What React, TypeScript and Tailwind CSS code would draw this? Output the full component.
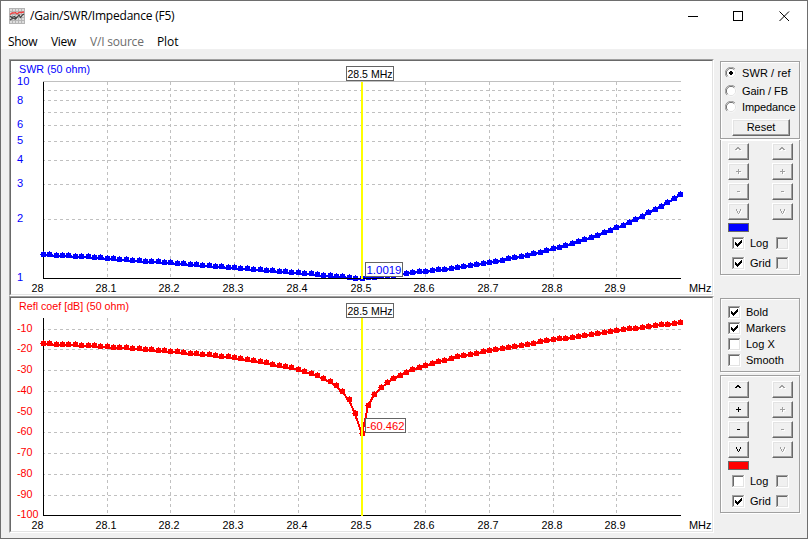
import { useState } from 'react'
import clsx from 'clsx'

// [step, return loss in dB], one step = 0.01 MHz from 28 MHz
const SWEEP = [
  [0, -17.1], [5, -17.7], [10, -18.55], [15, -19.6], [20, -20.8], [25, -22.2], [30, -23.9], [35, -26.4],
  [40, -29.5], [41, -30.5], [42, -31.4], [43, -32.4], [44, -33.9], [45, -35.3], [46, -37.2], [47, -40.1],
  [48, -44], [49, -50.8], [50, -60.462], [51, -46.9], [52, -41.6], [53, -38.1], [54, -36], [55, -33.9],
  [56, -32.4], [57, -31], [58, -29.5], [59, -28.4], [60, -27.6], [65, -23.5], [70, -20.4], [75, -17.8],
  [80, -15.3], [85, -13], [90, -10.8], [95, -8.75], [100, -6.83],
]

const STEPS = Array.from({ length: 101 }, (_, i) => i)
const TICKS = Array.from({ length: 10 }, (_, i) => i)

const SWR_GRID = [219, 184, 160, 141, 125, 112, 100, 90]
const SWR_LABELS = [['10', 85], ['8', 104], ['6', 128], ['5', 144], ['4', 163], ['3', 187], ['2', 222], ['1', 281]] as const
const REFL_GRID = [329, 349, 370, 391, 412, 432, 453, 474, 495]

function lossAt(step: number) {
  const next = Math.max(1, SWEEP.findIndex(p => p[0] >= step))
  const [x0, y0] = SWEEP[next - 1]
  const [x1, y1] = SWEEP[next]
  return y0 + ((y1 - y0) * (step - x0)) / (x1 - x0)
}

const xAt = (step: number) => Math.round(43 + step * 6.37)
const reflY = (step: number) => Math.floor(515 - (lossAt(step) + 100) * 2.067)
const swrY = (step: number) => {
  const gamma = Math.pow(10, lossAt(step) / 20)
  return Math.round(278 - 197 * Math.log10((1 + gamma) / (1 - gamma)))
}

function Txt({ x, y, w, children, fill = '#000' }: { x: number; y: number; w: number; children: string; fill?: string }) {
  return (
    <text x={x} y={y} fill={fill} textLength={w} lengthAdjust="spacingAndGlyphs">
      {children}
    </text>
  )
}

function Tag({ x, y, w, text, fill }: { x: number; y: number; w: number; text: string; fill?: string }) {
  return (
    <g>
      <rect x={x + 0.5} y={y + 0.5} width={w - 1} height={14} fill="#fff" stroke="#646464" />
      <Txt x={x + 1.5} y={y + 11.7} w={w - 3} fill={fill}>{text}</Txt>
    </g>
  )
}

interface PlotProps {
  top: number
  bottom: number
  grid: number[]
  color: string
  yAt: (step: number) => number
}

function Plot({ top, bottom, grid, color, yAt }: PlotProps) {
  return (
    <g shapeRendering="crispEdges">
      {grid.map(y => (
        <path key={y} d={`M44 ${y + 0.5}H681`} stroke="#c0c0c0" strokeDasharray="3 3" strokeDashoffset={2} />
      ))}
      {TICKS.slice(1).map(t => (
        <path key={t} d={`M${xAt(t * 10) + 0.5} ${top}V${bottom}`} stroke="#c0c0c0" strokeDasharray="3 3" />
      ))}
      <path d={`M43.5 ${top}V${bottom + 0.5}`} stroke="#000" fill="none" />
      <polyline
        points={STEPS.map(s => `${xAt(s)},${yAt(s) + 1}`).join(' ')}
        fill="none"
        stroke={color}
        strokeWidth={2}
      />
      {STEPS.map(s => (
        <path key={s} d={`M${xAt(s) - 2} ${yAt(s) - 2}h2v-1h1v1h2v5h-5v-2h-1v-1h1z`} fill={color} />
      ))}
      <path d={`M43 ${bottom + 0.5}H681`} stroke="#000" />
      <rect x={361} y={top - 1} width={2} height={bottom - top + 2} fill="#ff0" />
    </g>
  )
}

function FreqLabels({ y }: { y: number }) {
  return (
    <g>
      <Txt x={31.5} y={y} w={12}>28</Txt>
      {TICKS.slice(1).map(t => (
        <Txt key={t} x={xAt(t * 10) - 11.5} y={y} w={21}>{`28.${t}`}</Txt>
      ))}
      <Txt x={689} y={y} w={22.5}>MHz</Txt>
    </g>
  )
}

const PANEL = 'h-[237px] w-[705px] border border-t-[#a0a0a0] border-l-[#a0a0a0] border-r-white border-b-white'
const PANEL_IN = 'h-[235px] w-[703px] border border-t-[#696969] border-l-[#696969] border-r-[#e3e3e3] border-b-[#e3e3e3] bg-white'
const CHART_TEXT = "block font-['Liberation_Sans',Arial,sans-serif] text-[11.5px]"

function SwrChart() {
  return (
    <div className={PANEL}>
      <div className={PANEL_IN}>
        <svg width={701} height={233} viewBox="11 61 701 233" className={CHART_TEXT}>
          <Plot top={82} bottom={278} grid={SWR_GRID} color="#00f" yAt={swrY} />
          <path d="M43 81.5H681" stroke="#c0c0c0" />
          <Txt x={19} y={73} w={71} fill="#00f">SWR (50 ohm)</Txt>
          {SWR_LABELS.map(([label, y]) => (
            <Txt key={label} x={17} y={y} w={label.length * 6.2} fill="#00f">{label}</Txt>
          ))}
          <FreqLabels y={291.5} />
          <Tag x={346} y={66} w={48} text="28.5 MHz" />
          <Tag x={365} y={262} w={38} text="1.0019" fill="#00f" />
        </svg>
      </div>
    </div>
  )
}

function ReflChart() {
  return (
    <div className={PANEL}>
      <div className={PANEL_IN}>
        <svg width={701} height={233} viewBox="11 298 701 233" className={CHART_TEXT}>
          <Plot top={318} bottom={515} grid={REFL_GRID} color="#f00" yAt={reflY} />
          <Txt x={19} y={310} w={110} fill="#f00">Refl coef [dB] (50 ohm)</Txt>
          {[...REFL_GRID, 515].map((y, i) => (
            <Txt key={y} x={17} y={y + 3} w={i === 9 ? 21.5 : 15.5} fill="#f00">{`-${(i + 1) * 10}`}</Txt>
          ))}
          <FreqLabels y={528.7} />
          <Tag x={346} y={303} w={48} text="28.5 MHz" />
          <Tag x={365} y={418} w={41} text="-60.462" fill="#f00" />
        </svg>
      </div>
    </div>
  )
}

function Radio({ label, checked, onSelect, className }: { label: string; checked: boolean; onSelect: () => void; className: string }) {
  return (
    <button onClick={onSelect} className="flex h-3 items-center gap-[5px] whitespace-nowrap">
      <svg width={12} height={12} viewBox="0 0 12 12" className="shrink-0">
        <circle cx={6} cy={6} r={5.5} fill="#fff" />
        <path d="M1.9 10.1A5.5 5.5 0 0 1 10.1 1.9" stroke="#a0a0a0" fill="none" />
        <path d="M2.7 9.3A4.6 4.6 0 0 1 9.3 2.7" stroke="#696969" fill="none" />
        <path d="M9.3 2.7A4.6 4.6 0 0 1 2.7 9.3" stroke="#e3e3e3" fill="none" />
        {checked && <path d="M5 4h2v1h1v2h-1v1h-2v-1h-1v-2h1z" fill="#000" shapeRendering="crispEdges" />}
      </svg>
      <span className={className}>{label}</span>
    </button>
  )
}

function Check({ on = false, disabled = false }: { on?: boolean; disabled?: boolean }) {
  return (
    <svg width={13} height={13} viewBox="0 0 13 13" shapeRendering="crispEdges" className="block shrink-0">
      <rect width={13} height={13} fill="#fff" />
      <path d="M0 0h12v1h-11v11h-1z" fill="#a0a0a0" />
      <path d="M1 1h10v1h-9v9h-1z" fill="#696969" />
      <path d="M11 1h1v11h-11v-1h10z" fill="#e3e3e3" />
      {disabled && <rect x={2} y={2} width={9} height={9} fill="#f0f0f0" />}
      {on && <path d="M3 5h1v1h1v1h1v-1h1v-1h1v-1h1v-1h1v3h-1v1h-1v1h-1v1h-1v1h-1v-1h-1v-1h-1z" fill="#000" />}
    </svg>
  )
}

function Option({ label, on }: { label: string; on?: boolean }) {
  return (
    <div className="flex h-[13px] items-center gap-[5px]">
      <Check on={on} />
      <span className="pb-0.5">{label}</span>
    </div>
  )
}

const GLYPHS: Record<string, string> = {
  up: 'M9 4h2v1h1v1h1v1h-2v-1h-2v1h-2v-1h1v-1h1z',
  plus: 'M10 6h1v2h2v1h-2v2h-1v-2h-2v-1h2z',
  minus: 'M9 8h3v1h-3z',
  down: 'M8 6h1v2h1v2h1v-2h1v-2h1v2h-1v2h-1v1h-1v-1h-1v-2h-1z',
}

const RAISED = 'border border-t-white border-l-white border-r-[#696969] border-b-[#696969] shadow-[inset_-1px_-1px_0_#a0a0a0,inset_1px_1px_0_#e3e3e3]'

function SpinButton({ kind, disabled }: { kind: string; disabled?: boolean }) {
  return (
    <button disabled={disabled} className={clsx('h-[17px] w-[21px]', RAISED)}>
      <svg width={21} height={17} viewBox="0 0 21 17" shapeRendering="crispEdges" className="-mt-px -ml-px block max-w-none">
        {disabled && <path d={GLYPHS[kind]} fill="#fff" transform="translate(1 1)" />}
        <path d={GLYPHS[kind]} fill={disabled ? '#a0a0a0' : '#000'} />
      </svg>
    </button>
  )
}

function SpinColumn({ disabled }: { disabled?: boolean }) {
  return (
    <div className="flex flex-col gap-[3px]">
      {Object.keys(GLYPHS).map(k => <SpinButton key={k} kind={k} disabled={disabled} />)}
    </div>
  )
}

const GROUP = 'w-20 border border-[#a0a0a0] shadow-[1px_1px_0_#fff,inset_1px_1px_0_#fff]'

function ScaleGroup({ className, swatch, log, disabled }: { className: string; swatch: string; log: boolean; disabled?: boolean }) {
  return (
    <div className={clsx(GROUP, 'px-[7px]', className)}>
      <div className="flex w-[65px] justify-between">
        <SpinColumn disabled={disabled} />
        <SpinColumn disabled />
      </div>
      <div className={clsx('mt-[3px] h-[9px] w-[21px] border border-[#696969]', swatch)} />
      <div className="mt-[5px] ml-1 flex h-[13px] items-center">
        <Check on={log} />
        <span className="ml-[5px] w-[26px] pb-0.5">Log</span>
        <Check disabled />
      </div>
      <div className="mt-[7px] ml-1 flex h-[13px] items-center">
        <Check on />
        <span className="ml-[5px] w-[26px] pb-0.5">Grid</span>
        <Check disabled />
      </div>
    </div>
  )
}

function AppIcon() {
  return (
    <svg width={16} height={16} viewBox="0 0 16 16">
      <rect width={16} height={16} fill="#dcdcdc" />
      <path
        d="M0 .5H16M0 3.5H16M0 6.5H16M0 9.5H16M0 12.5H16M0 15.5H16M.5 0V16M3.5 0V16M6.5 0V16M9.5 0V16M12.5 0V16M15.5 0V16"
        stroke="#b4b4b4"
        shapeRendering="crispEdges"
      />
      <path d="M1 6.5L3 5H5L6.500 4.500L8 6L10 4.500H12L15 4" stroke="#f04040" strokeWidth={1.3} fill="none" />
      <path d="M1 8l2 1.500 2.500-1 1.500 2 3-3.500 1.500 2.500 2-2.500L15 6M1 12l3-2 2 1 2-2" stroke="#404040" strokeWidth={1.1} fill="none" />
    </svg>
  )
}

export default function App() {
  const [mode, setMode] = useState('SWR / ref')

  return (
    <div className="flex h-[539px] w-[808px] flex-col border border-[#6e6e6e] bg-[#f0f0f0] font-['Liberation_Sans',Arial,sans-serif] text-[11px] leading-3 text-black select-none">
      <header className="h-12 bg-white font-['Open_Sans','Noto_Sans',sans-serif] text-xs leading-4">
        <div className="flex h-[29px] items-center pl-2">
          <AppIcon />
          <h1 className="ml-[5px] tracking-[-0.22px]">/Gain/SWR/Impedance (F5)</h1>
          <svg width={102} height={12} viewBox="688 9 102 12" className="ml-auto mr-[17px]" fill="none" stroke="#000">
            <path d="M688 15.5h10M733.5 10.5h9v9h-9z" shapeRendering="crispEdges" />
            <path d="M779.5 10.5l9.5 9.5M789 10.5l-9.5 9.5" />
          </svg>
        </div>
        <nav className="flex h-[19px] items-start pt-1 pl-[7px]">
          <span className="w-[43px] tracking-[-0.3px]">Show</span>
          <span className="w-[39px] tracking-[-0.3px]">View</span>
          <span className="w-[67px] tracking-[-0.2px] text-[#6d6d6d]">V/I source</span>
          <span className="tracking-[-0.1px]">Plot</span>
        </nav>
      </header>

      <main className="flex gap-1.5 pt-2.5 pl-2">
        <div className="flex flex-col">
          <SwrChart />
          <ReflChart />
        </div>

        <aside className="flex flex-col pt-0.5">
          <div className={clsx(GROUP, 'flex h-[78px] flex-col pt-[5px] pl-1')}>
            <Radio label="SWR / ref" checked={mode === 'SWR / ref'} onSelect={() => setMode('SWR / ref')} className="tracking-[0.1px]" />
            <div className="mt-1.5">
              <Radio label="Gain / FB" checked={mode === 'Gain / FB'} onSelect={() => setMode('Gain / FB')} className="tracking-[-0.05px]" />
            </div>
            <div className="mt-1">
              <Radio label="Impedance" checked={mode === 'Impedance'} onSelect={() => setMode('Impedance')} className="tracking-[-0.1px]" />
            </div>
            <button className={clsx('mt-1.5 ml-[7px] h-[17px] w-[58px] pb-0.5 text-center', RAISED)}>Reset</button>
          </div>
          <ScaleGroup className="mt-px h-[135px] border-t-0 pt-[3px]" swatch="bg-[#00f]" log disabled />

          <div className={clsx(GROUP, 'mt-[23px] flex h-[74px] flex-col gap-[3px] pt-[7px] pl-[7px]')}>
            <Option label="Bold" on />
            <Option label="Markers" on />
            <Option label="Log X" />
            <Option label="Smooth" />
          </div>
          <ScaleGroup className="mt-[3px] h-[138px] pt-[5px]" swatch="bg-[#f00]" log={false} />
        </aside>
      </main>
    </div>
  )
}
